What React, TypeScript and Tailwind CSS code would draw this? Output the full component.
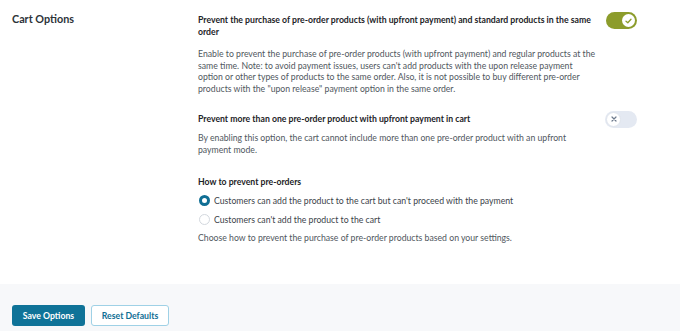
import React from "react";

function ToggleOn() {
  return (
    <div className="relative w-[31px] h-[17px] rounded-full bg-[#8c9c2b] shrink-0">
      <div className="absolute right-[2px] top-[2px] w-[13px] h-[13px] rounded-full bg-white flex items-center justify-center">
        <svg width="7" height="6" viewBox="0 0 7 6" fill="none">
          <path d="M1 3.2 L2.8 4.8 L6 1.2" stroke="#8c9c2b" strokeWidth="1.3" strokeLinecap="round" strokeLinejoin="round" />
        </svg>
      </div>
    </div>
  );
}

function ToggleOff() {
  return (
    <div className="relative w-[32px] h-[17px] rounded-full bg-[#e4e9f2] shrink-0">
      <div className="absolute left-[1px] top-[1px] w-[15px] h-[15px] rounded-full bg-white border border-[#dfe4ec] flex items-center justify-center">
        <svg width="6" height="6" viewBox="0 0 6 6" fill="none">
          <path d="M1 1 L5 5 M5 1 L1 5" stroke="#6d7a8c" strokeWidth="1.2" strokeLinecap="round" />
        </svg>
      </div>
    </div>
  );
}

export default function App() {
  return (
    <div
      className="w-[680px] h-[331px] bg-white flex flex-col overflow-hidden"
      style={{ fontFamily: 'Lato, "Open Sans", sans-serif' }}
    >
      <div className="flex pl-3 pt-[11px] h-[284px]">
        <div className="w-[186px] shrink-0 text-[10.8px] leading-[16px] font-bold text-[#2c3338]">
          Cart Options
        </div>
        <div className="w-[439px] flex flex-col pt-[3px]">
          <div className="flex justify-between items-start">
            <div className="w-[398px] text-[8.7px] leading-[12px] font-bold text-[#1d2327]">
              Prevent the purchase of pre-order products (with upfront payment) and standard products in the same order
            </div>
            <div className="-mt-[2px]">
              <ToggleOn />
            </div>
          </div>
          <div className="w-[398px] mt-[10px] text-[8.7px] leading-[11.7px] text-[#50575e]">
            Enable to prevent the purchase of pre-order products (with upfront payment) and regular products at the same time. Note: to avoid payment issues, users can't add products with the upon release payment option or other types of products to the same order. Also, it is not possible to buy different pre-order products with the "upon release" payment option in the same order.
          </div>

          <div className="flex justify-between items-start mt-[18px]">
            <div className="w-[398px] text-[8.7px] leading-[12px] font-bold text-[#1d2327]">
              Prevent more than one pre-order product with upfront payment in cart
            </div>
            <div className="-mt-[2px]">
              <ToggleOff />
            </div>
          </div>
          <div className="w-[398px] mt-[4px] text-[8.7px] leading-[12px] text-[#50575e]">
            By enabling this option, the cart cannot include more than one pre-order product with an upfront payment mode.
          </div>

          <div className="mt-[20px] text-[8.7px] leading-[12px] font-bold text-[#1d2327]">
            How to prevent pre-orders
          </div>
          <div className="mt-[7px] flex items-center gap-[4px] text-[8.7px] leading-[12px] text-[#3c434a]">
            <span className="w-[11px] h-[11px] rounded-full border-[3.5px] border-[#0f6e94] bg-white shrink-0 ml-[1px]" />
            Customers can add the product to the cart but can't proceed with the payment
          </div>
          <div className="mt-[7px] flex items-center gap-[4px] text-[8.7px] leading-[12px] text-[#3c434a]">
            <span className="w-[11px] h-[11px] rounded-full border border-[#d3d8de] bg-white shrink-0 ml-[1px]" />
            Customers can't add the product to the cart
          </div>
          <div className="mt-[6px] text-[8.7px] leading-[12px] text-[#50575e]">
            Choose how to prevent the purchase of pre-order products based on your settings.
          </div>
        </div>
      </div>
      <div className="flex-1 bg-[#f7f8fa] pt-[21px] pl-3 flex gap-[6px] items-start">
        <button className="h-[21px] w-[73px] rounded-[3px] bg-[#0f7398] text-white text-[8.7px] font-bold">
          Save Options
        </button>
        <button className="h-[21px] w-[78px] rounded-[3px] bg-white border border-[#9fd1e6] text-[#0f6e94] text-[8.7px] font-bold">
          Reset Defaults
        </button>
      </div>
    </div>
  );
}
